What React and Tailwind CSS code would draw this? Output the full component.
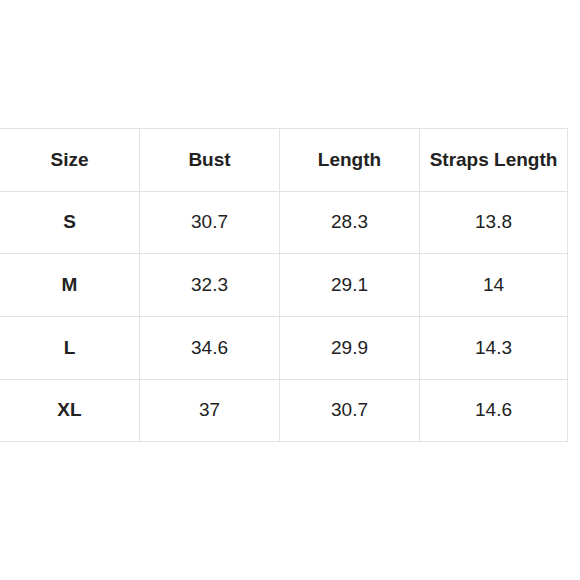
import React from 'react';

const rows = [
  ['S', '30.7', '28.3', '13.8'],
  ['M', '32.3', '29.1', '14'],
  ['L', '34.6', '29.9', '14.3'],
  ['XL', '37', '30.7', '14.6'],
];

const headers = ['Size', 'Bust', 'Length', 'Straps Length'];
const rowHeights = ['h-[62px]', 'h-[63px]', 'h-[63px]', 'h-[62px]'];

const App = () => {
  return (
    <div className="w-[580px] h-[580px] bg-white overflow-hidden pt-[128px] font-['Liberation_Sans',Arial,sans-serif] text-[#222]">
      <table className="border-collapse -ml-[1px] text-[19px]">
        <colgroup>
          <col className="w-[140px]" />
          <col className="w-[140px]" />
          <col className="w-[140px]" />
          <col className="w-[148px]" />
        </colgroup>
        <thead>
          <tr className="h-[63px]">
            {headers.map((h) => (
              <th key={h} className="border border-[#e3e3e3] font-bold text-center p-0">
                {h}
              </th>
            ))}
          </tr>
        </thead>
        <tbody>
          {rows.map((r, ri) => (
            <tr key={r[0]} className={rowHeights[ri]}>
              {r.map((c, i) => (
                <td
                  key={i}
                  className={`border border-[#e3e3e3] text-center p-0 ${i === 0 ? 'font-bold' : ''}`}
                >
                  {c}
                </td>
              ))}
            </tr>
          ))}
        </tbody>
      </table>
    </div>
  );
};

export default App;
